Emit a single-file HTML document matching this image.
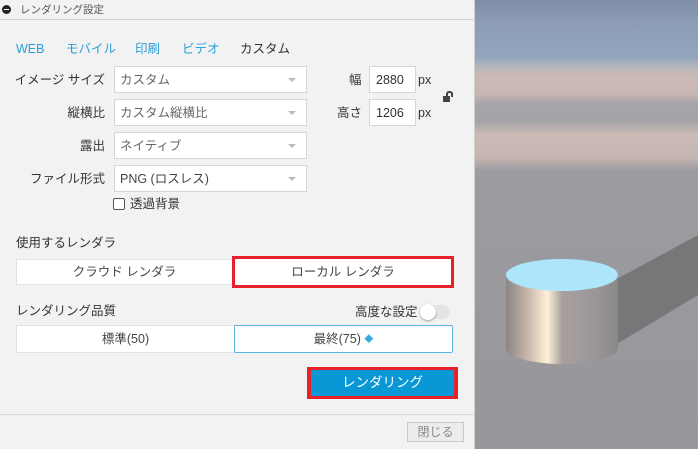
<!DOCTYPE html>
<html><head><meta charset="utf-8"><style>
*{box-sizing:border-box;margin:0;padding:0}
body{width:698px;height:449px;overflow:hidden;font-family:"Liberation Sans","Noto Sans CJK JP",sans-serif;font-size:12.5px;line-height:14px;color:#333;position:relative;background:#f2f2f2}
.a{position:absolute}
.f{display:flex;align-items:center}
.c{justify-content:center}
.panel{left:0;top:0;width:475px;height:449px;background:#f2f2f2;border-right:1px solid #d0d0d0}
.sel{background:#fff;border:1px solid #d6d6d6;height:27px;padding:0 5px;color:#666}
.sel:after{content:"";position:absolute;right:10px;top:11px;border:4px solid transparent;border-top:4px solid #bbb}
.lbl{justify-content:flex-end;width:100px;left:5px;height:27px;color:#333}
.inp{background:#fff;border:1px solid #d6d6d6;width:47px;height:27px;padding:0 6px}
.btn{background:#fff;border:1px solid #e2e2e2;color:#444}
</style></head><body>
<div class="a panel"></div>
<div class="a" style="left:0;top:0;width:474px;height:20px;border-bottom:1px solid #d4d4d4;background:#f2f2f2"></div>
<div class="a" style="left:2px;top:5px;width:9px;height:9px;border-radius:50%;background:#222"></div>
<div class="a" style="left:4px;top:9px;width:5px;height:1px;background:#fff"></div>
<div class="a f" style="left:20px;top:0;height:19px;font-size:10.5px;color:#555">レンダリング設定</div>
<div class="a f" style="top:40px;height:18px;left:16px;color:#2a9fd8">WEB</div>
<div class="a f" style="top:40px;height:18px;left:66px;color:#2a9fd8">モバイル</div>
<div class="a f" style="top:40px;height:18px;left:135px;color:#2a9fd8">印刷</div>
<div class="a f" style="top:40px;height:18px;left:182px;color:#2a9fd8">ビデオ</div>
<div class="a f" style="top:40px;height:18px;left:240px;color:#333">カスタム</div>

<div class="a f lbl" style="top:66px">イメージ サイズ</div>
<div class="a f sel" style="left:114px;top:66px;width:193px">カスタム</div>
<div class="a f lbl" style="top:99px">縦横比</div>
<div class="a f sel" style="left:114px;top:99px;width:193px">カスタム縦横比</div>
<div class="a f lbl" style="top:132px">露出</div>
<div class="a f sel" style="left:114px;top:132px;width:193px">ネイティブ</div>
<div class="a f lbl" style="top:165px">ファイル形式</div>
<div class="a f sel" style="left:114px;top:165px;width:193px;color:#444">PNG (ロスレス)</div>
<div class="a" style="left:113px;top:198px;width:12px;height:12px;border:1px solid #555;border-radius:2px;background:#fff"></div>
<div class="a f" style="left:130px;top:196px;height:16px">透過背景</div>

<div class="a f" style="left:349px;top:66px;height:27px">幅</div>
<div class="a f inp" style="left:369px;top:66px">2880</div>
<div class="a f" style="left:418px;top:66px;height:27px">px</div>
<div class="a f" style="left:337px;top:99px;height:27px">高さ</div>
<div class="a f inp" style="left:369px;top:99px">1206</div>
<div class="a f" style="left:418px;top:99px;height:27px">px</div>
<div class="a" style="left:446px;top:91px;width:7px;height:6px;border:2px solid #444;border-bottom:none;border-radius:3px 3px 0 0"></div>
<div class="a" style="left:443px;top:96px;width:7px;height:6px;background:#444"></div>

<div class="a f" style="left:16px;top:235px;height:16px">使用するレンダラ</div>
<div class="a f c btn" style="left:16px;top:259px;width:217px;height:26px">クラウド レンダラ</div>
<div class="a f c btn" style="left:232px;top:256px;width:222px;height:32px;border:3px solid #e8202a">ローカル レンダラ</div>

<div class="a f" style="left:16px;top:303px;height:16px">レンダリング品質</div>
<div class="a f" style="left:355px;top:304px;height:16px">高度な設定</div>
<div class="a" style="left:420px;top:305px;width:30px;height:14px;border-radius:7px;background:#e4e4e4"></div>
<div class="a" style="left:420px;top:304px;width:16px;height:16px;border-radius:50%;background:#fff;box-shadow:0 1px 2px rgba(0,0,0,.35)"></div>
<div class="a f c btn" style="left:16px;top:325px;width:219px;height:28px">標準(50)</div>
<div class="a f c btn" style="left:234px;top:325px;width:219px;height:28px;border-color:#5ab4e0;border-radius:2px">最終(75)&nbsp;<span style="color:#39a9e0;font-size:9px">◆</span></div>

<div class="a" style="left:307px;top:367px;width:151px;height:32px;background:#e8202a"></div>
<div class="a f c" style="left:311px;top:370px;width:143px;height:26px;background:#0a97d6;color:#fff;font-size:13.5px">レンダリング</div>

<div class="a" style="left:0;top:414px;width:474px;height:1px;background:#d8d8d8"></div>
<div class="a f c" style="left:407px;top:422px;width:57px;height:20px;border:1px solid #c8c8c8;background:#ececec;color:#888;font-size:12px">閉じる</div>

<svg class="a" style="left:475px;top:0" width="223" height="449">
<defs>
<linearGradient id="bg" x1="0" y1="0" x2="0" y2="1">
<stop offset="0" stop-color="#7f8ea6"/><stop offset=".04" stop-color="#8a9ab2"/><stop offset=".13" stop-color="#93a6bd"/><stop offset=".15" stop-color="#b8b6bc"/>
<stop offset=".17" stop-color="#cbb9b4"/><stop offset=".21" stop-color="#c7b6b2"/><stop offset=".23" stop-color="#a7a5ab"/><stop offset=".27" stop-color="#a5a3a8"/>
<stop offset=".3" stop-color="#cbbab5"/><stop offset=".35" stop-color="#c6b6b2"/><stop offset=".38" stop-color="#9c9ba0"/><stop offset="1" stop-color="#96969b"/>
</linearGradient>
<linearGradient id="cy" x1="0" x2="1">
<stop offset="0" stop-color="#8c8585"/><stop offset=".2" stop-color="#c9b8ab"/><stop offset=".37" stop-color="#fff0d8"/><stop offset=".5" stop-color="#a8a0a0"/><stop offset=".8" stop-color="#9a9698"/><stop offset="1" stop-color="#8a8888"/>
</linearGradient>
</defs>
<rect width="223" height="449" fill="url(#bg)"/>
<polygon points="140,280 223,235 223,295 140,345" fill="#777779"/>
<path d="M31,275 L31,348 A56,16 0 0 0 143,348 L143,275 Z" fill="url(#cy)"/>
<ellipse cx="87" cy="275" rx="56" ry="16" fill="#ade6fb"/>
</svg>
</body></html>
